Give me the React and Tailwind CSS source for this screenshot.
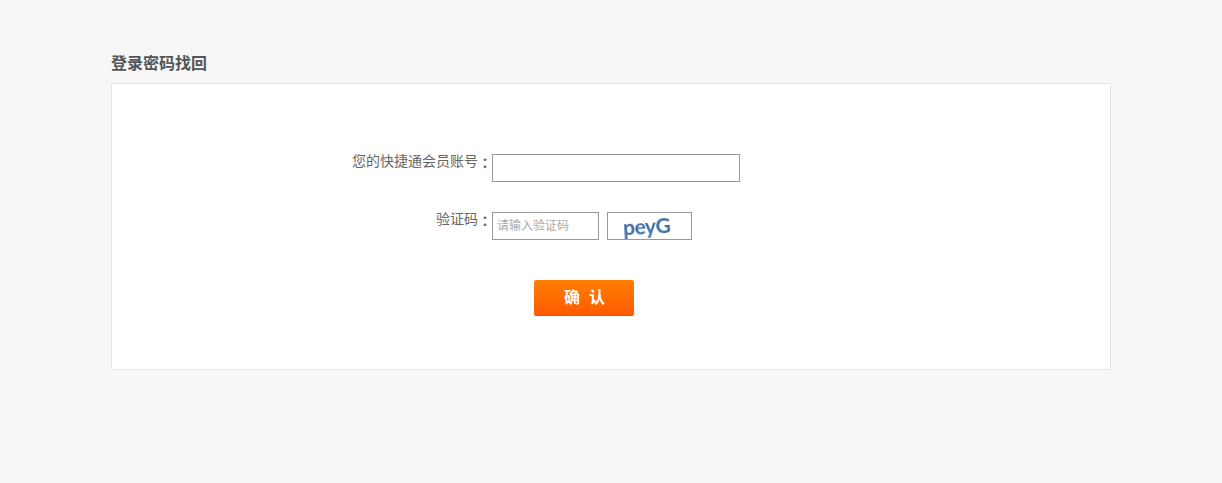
import React from "react";

const font = "font-['Liberation_Sans','Noto_Sans_CJK_SC',sans-serif]";
const colon = "inline-block translate-y-px font-['Noto_Sans_CJK_TC',sans-serif] font-bold";

const App = () => {
  return (
    <div className={`min-h-[483px] bg-[#f7f7f7] pl-[111px] pt-[53px] ${font}`}>
      {/* Title */}
      <h2 className="h-[30px] text-base leading-[22px] font-bold text-[#555]">
        登录密码找回
      </h2>

      {/* Card */}
      <div className="flex h-[287px] w-[1000px] flex-col border border-[#e5e5e5] bg-white pt-[70px]">
        <div className="flex">
          <label className="flex h-4 w-[380px] items-start justify-end text-sm leading-[14px] text-[#666]">
            您的快捷通会员账号<span className={colon}>：</span>
          </label>
          <input
            type="text"
            className="h-[28px] w-[248px] border border-[#999] bg-white outline-none"
          />
        </div>

        <div className="mt-[30px] flex">
          <label className="flex h-4 w-[380px] items-start justify-end text-sm leading-[14px] text-[#666]">
            验证码<span className={colon}>：</span>
          </label>
          <input
            type="text"
            placeholder="请输入验证码"
            className="h-[28px] w-[107px] border border-[#999] bg-white px-1 text-xs outline-none placeholder:text-[#aaa]"
          />
          {/* Captcha */}
          <div className="ml-2 flex h-[28px] w-[85px] items-center border border-[#999] bg-white pl-[15px]">
            <span className="-mt-0.5 -rotate-3 font-['Lato',sans-serif] text-[21px] leading-none font-bold tracking-[-0.5px] text-[#3f6fa3] blur-[0.4px]">
              peyG
            </span>
          </div>
        </div>

        <button className="mt-10 ml-[422px] h-[36px] w-[100px] rounded-[2px] border-b border-[#e85400] bg-gradient-to-b from-[#ff7f00] to-[#ff5a00] pt-px pl-px text-base font-bold text-white">
          确&nbsp;&nbsp;认
        </button>
      </div>
    </div>
  );
};

export default App;
